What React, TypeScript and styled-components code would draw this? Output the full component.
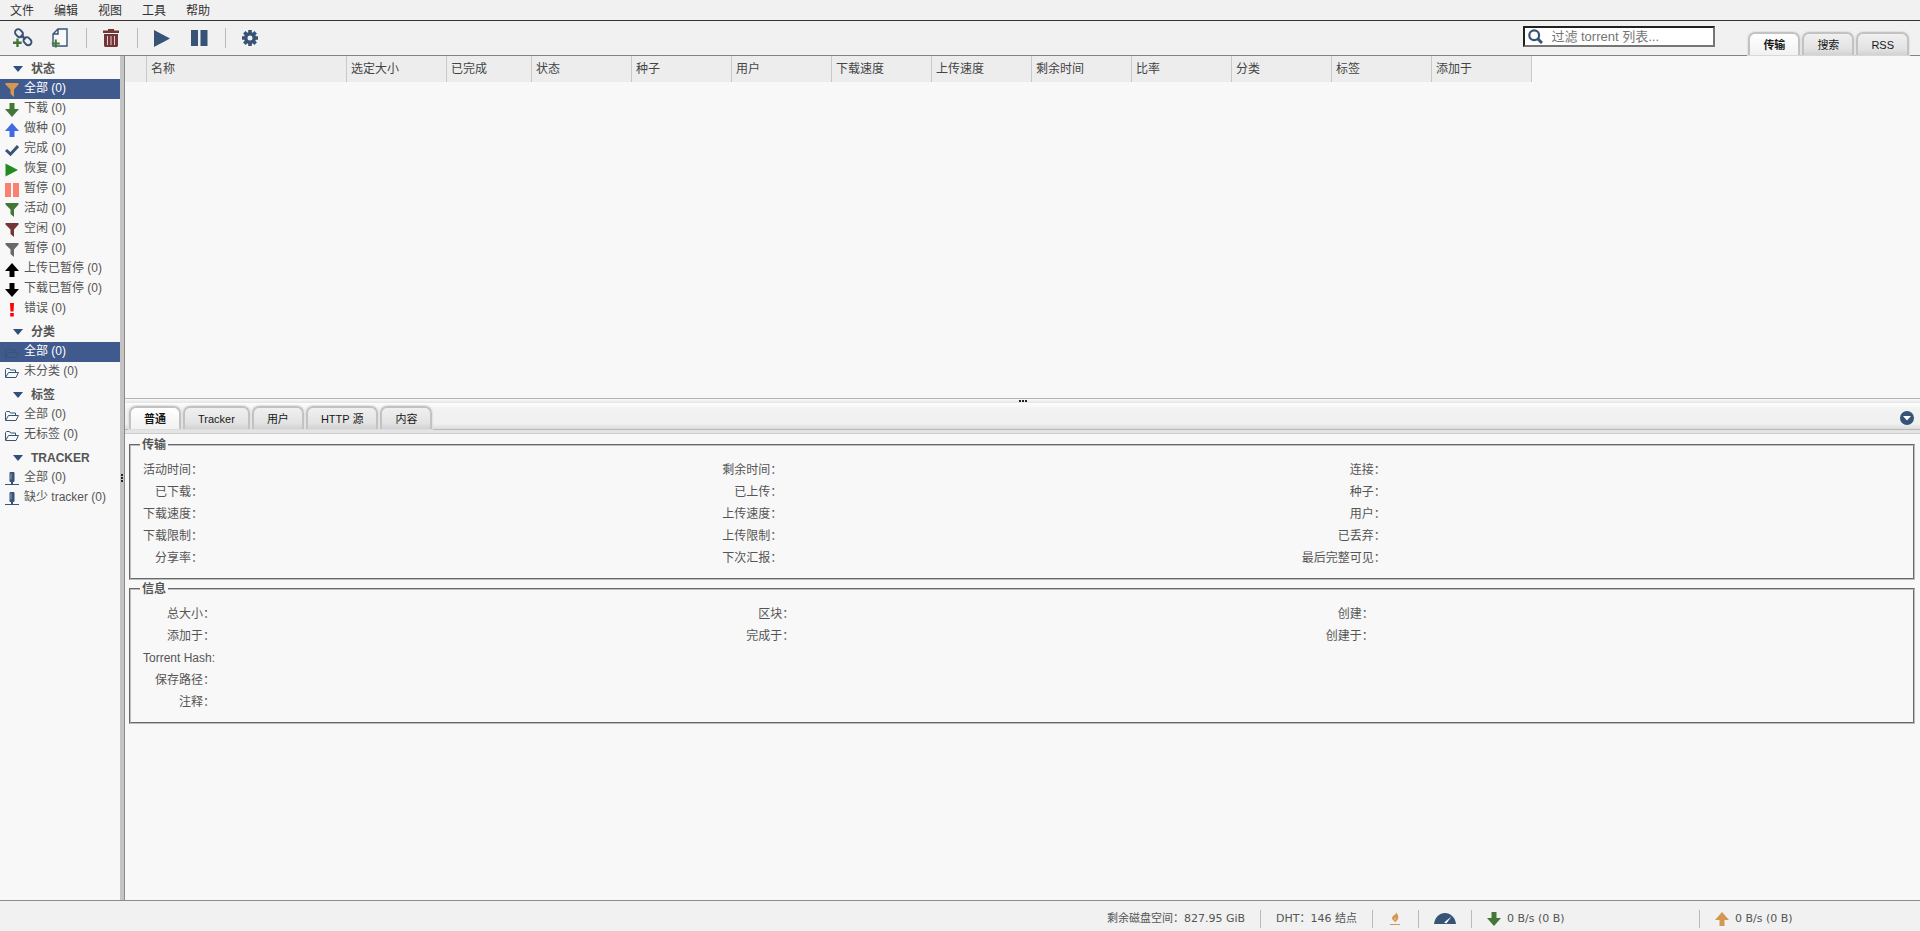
import React from 'react';
import styled, { createGlobalStyle, css } from 'styled-components';

const navy = '#375376';
const green = '#437737';
const maroon = '#733535';
const orange = '#d39752';

const Global = createGlobalStyle`
  * { box-sizing: border-box; }
  body {
    margin: 0;
    background: #f1f1f1;
    color: #555;
    font: 12px/16px "Liberation Sans", Arial, "Noto Sans CJK SC", sans-serif;
  }
  button, input { font: inherit; }
  ul, dl, dd { margin: 0; padding: 0; list-style: none; }
`;

const PlainButton = styled.button`
  margin: 0;
  padding: 0;
  border: 0;
  background: none;
  color: inherit;
  text-align: left;
  white-space: nowrap;
`;

const Page = styled.div`
  display: flex;
  flex-direction: column;
  height: 100vh;
  min-height: 600px;
`;

const MenuBar = styled.nav`
  display: flex;
  height: 21px;
  border-bottom: 1px solid #333;
`;

const MenuButton = styled(PlainButton)`
  padding: 2px 10px 0;
  color: #333;
`;

const Toolbar = styled.header`
  display: flex;
  align-items: stretch;
  justify-content: space-between;
  height: 35px;
  border-bottom: 1px solid #838383;
`;

const ToolGroup = styled.div`
  display: flex;
  align-items: center;
  padding: 0 9px;
`;

const ToolButton = styled(PlainButton)`
  display: flex;
  align-items: center;
  justify-content: center;
  width: 28px;
  height: 28px;
  margin-right: 9px;
`;

const ToolDivider = styled.span`
  width: 1px;
  height: 20px;
  margin-right: 10px;
  margin-left: 3px;
  background: #bbb;
`;

const ToolbarEnd = styled.div`
  display: flex;
  padding-right: 5px;
`;

const SearchBox = styled.label`
  display: flex;
  align-items: center;
  width: 192px;
  height: 21px;
  margin: 5px 30px 0 0;
  padding-left: 3px;
  border: 2px inset #767676;
  background: #fff;
`;

const SearchInput = styled.input`
  width: 100%;
  min-width: 0;
  padding: 0 0 0 8px;
  border: 0;
  outline: 0;
  background: transparent;
  font-size: 13px;
  line-height: 16px;
  color: #333;
  &::placeholder { color: #757575; }
`;

const TabList = styled.div`
  display: flex;
  align-items: flex-end;
  gap: 2px;
`;

const TopTabList = styled(TabList)`
  padding: 0 6px 0 3px;
`;

const Tab = styled.button<{ $active?: boolean }>`
  height: 23px;
  padding: 0 13px;
  border: 2px solid #c2c2c2;
  border-bottom: 0;
  border-radius: 7px 7px 0 0;
  box-shadow: 0 0 1px 1px #e2e2e2;
  background: ${p => (p.$active ? 'linear-gradient(#fff, #f1f1f1)' : 'linear-gradient(#f0f0f0, #e3e3e3 70%, #d2d2d2)')};
  color: #181818;
  font-size: 11px;
  line-height: 16px;
  font-weight: ${p => (p.$active ? 700 : 400)};
  white-space: nowrap;
`;

const Desktop = styled.div`
  display: flex;
  flex: 1;
  min-height: 0;
  background: #f8f8f8;
`;

const Sidebar = styled.aside`
  flex: 0 0 120px;
  overflow: hidden;
`;

const SectionButton = styled(PlainButton)`
  display: flex;
  align-items: center;
  gap: 8px;
  width: 100%;
  height: 23px;
  padding: 3px 0 0 13px;
  font-weight: 700;
  text-transform: uppercase;
`;

const FilterButton = styled(PlainButton)<{ $selected?: boolean }>`
  display: flex;
  align-items: center;
  gap: 5px;
  width: 100%;
  height: 20px;
  padding-left: 5px;
  ${p => p.$selected && css`
    background: #415a8d;
    color: #fff;
  `}
  svg { margin-top: 1px; }
`;

const FilterLabel = styled.span`
  margin-bottom: 2px;
`;

const VerticalHandle = styled.div`
  display: flex;
  align-items: center;
  justify-content: center;
  flex: 0 0 5px;
  border-right: 1px solid #8a8a8a;
  background: #c4c4c4;
`;

const Main = styled.main`
  display: flex;
  flex: 1;
  flex-direction: column;
  min-width: 0;
`;

const Transfers = styled.section`
  flex: 0 0 343px;
  overflow: hidden;
  border-bottom: 1px solid #b4b4b4;
`;

const TransferTable = styled.table`
  table-layout: fixed;
  width: 1407px;
  border-collapse: separate;
  border-spacing: 0;
`;

const ColumnHead = styled.th<{ $width: number }>`
  width: ${p => p.$width}px;
  height: 26px;
  padding: 0 4px;
  border-right: 1px solid #c9c9c9;
  background: #ededed;
  color: #444;
  font-weight: 400;
  text-align: left;
  white-space: nowrap;
`;

const HorizontalHandle = styled.div`
  display: flex;
  align-items: center;
  justify-content: center;
  flex: 0 0 4px;
  background: linear-gradient(#fafafa, #e4e4e4);
`;

const PropertyBar = styled.div`
  display: flex;
  align-items: flex-end;
  justify-content: space-between;
  flex: none;
  height: 27px;
  padding: 0 6px 0 4px;
  border-bottom: 1px solid #b8b8b8;
  background: linear-gradient(#fdfdfd, #f2f2f2 25%, #f0f0f0 80%, #dcdcdc);
`;

const CollapseButton = styled(PlainButton)`
  display: flex;
  margin-bottom: 4px;
`;

const BarShade = styled.div`
  flex: 0 0 4px;
  border-bottom: 1px solid #cdcdcd;
  background: #e4e4e4;
`;

const Properties = styled.section`
  display: flex;
  flex: 1;
  flex-direction: column;
  gap: 1px;
  min-height: 0;
  overflow: hidden;
  padding: 3px 5px 0 4px;
`;

const Group = styled.fieldset`
  min-width: 0;
  margin: 0;
  padding: 6px 8px 9px 12px;
  border: 2px groove #bdbdbd;
`;

const GroupTitle = styled.legend`
  margin-left: -3px;
  padding: 0 2px;
  font-weight: 700;
`;

const Facts = styled.dl`
  display: grid;
  grid-template-columns: repeat(3, auto 1fr);
  line-height: 22px;
`;

const FactName = styled.dt`
  text-align: right;
  white-space: nowrap;
`;

const FactValue = styled.dd<{ $wide?: boolean }>`
  ${p => p.$wide && 'grid-column: 2 / -1;'}
`;

const StatusBar = styled.footer`
  display: flex;
  align-items: center;
  justify-content: flex-end;
  flex: none;
  height: 31px;
  padding-top: 6px;
  border-top: 1px solid #8c8c8c;
  background: #f1f1f1;
  font-family: "DejaVu Sans", Verdana, "Noto Sans CJK SC", sans-serif;
  font-size: 11px;
`;

const StatusItem = styled.div<{ $width?: number }>`
  display: flex;
  align-items: center;
  height: 18px;
  width: ${p => (p.$width ? `${p.$width}px` : 'auto')};
  padding: 0 15px;
  border-left: 1px solid #bbb;
  white-space: nowrap;
  &:first-child { border-left: 0; }
`;

const StatusButton = styled(PlainButton)`
  display: flex;
  align-items: center;
  gap: 6px;
`;

type IconName =
  | 'funnel' | 'down' | 'up' | 'check' | 'play' | 'pause' | 'error' | 'folder' | 'server';

const shapes: Record<IconName, (c: string) => React.ReactNode> = {
  funnel: c => <path fill={c} d="M.5 0h13v1.500L9 6.500V14L5.500 11V6.500L.5 1.500z" />,
  down: c => <path fill={c} d="M4.500 0h5v6H14L7 14 0 6h4.500z" />,
  up: c => <path fill={c} d="M4.500 14h5V8H14L7 0 0 8h4.500z" />,
  check: c => <path fill="none" stroke={c} strokeWidth="3" d="M1 7l4.500 4.200L13 3" />,
  play: c => <path fill={c} d="M.5 .5L13 7 .5 13.500z" />,
  pause: c => <path fill={c} d="M0 0h6v14H0zM8 0h6v14H8z" />,
  error: c => <path fill={c} d="M5 0h4L8.500 8.500h-3zM5.200 10h3.600v3.500H5.200z" />,
  folder: c => (
    <path
      fill="none"
      stroke={c}
      strokeWidth="1"
      strokeLinejoin="round"
      d="M.5 11V3.500L1.500 2.500h3l1 1.500h5v2.500M.5 11.500L3.500 6.500h10l-2.500 5z"
    />
  ),
  server: c => (
    <>
      <rect x="4.500" y="0" width="5" height="10" rx="1" fill={c} />
      <path stroke="#8fa5bd" d="M6 1.500v6" />
      <path fill={c} d="M6 10h2v2h6v1H0v-1h6z" />
    </>
  ),
};

const Icon = ({ name, color }: { name: IconName; color: string }) => (
  <svg width="14" height="14" viewBox="0 0 14 14" aria-hidden="true">
    {shapes[name](color)}
  </svg>
);

const LinkIcon = () => (
  <svg width="20" height="20" viewBox="0 0 20 20" aria-hidden="true">
    <g fill="none" stroke={navy} strokeWidth="1.900">
      <rect x="1.700" y="2" width="8.600" height="6.400" rx="3.200" transform="rotate(45 6 5.200)" />
      <rect x="10.200" y="10" width="8.600" height="6.400" rx="3.200" transform="rotate(45 14.500 13.200)" />
      <path strokeWidth="2.400" d="M8 6.800l4.500 4.500" />
    </g>
    <path fill={green} d="M3.300 10.500h2.400v3h3v2.400h-3V19H3.300v-3.100H0v-2.400h3.300z" />
  </svg>
);

const FileIcon = () => (
  <svg width="18" height="20" viewBox="0 0 18 20" aria-hidden="true">
    <path fill="#f8f8f8" stroke={navy} strokeWidth="1.400" d="M2 18V6l5-5h9v17zM2 6h5V1" />
    <path fill={green} d="M3.800 11.500h2v3h3v2h-3v3h-2v-3H.8v-2h3z" />
  </svg>
);

const TrashIcon = () => (
  <svg width="16" height="18" viewBox="0 0 16 18" aria-hidden="true">
    <path fill={maroon} d="M5 0h6v1.500h5V4H0V1.500h5zM1 5h14v12l-1 1H2l-1-1z" />
    <path stroke="#e0cfcf" strokeWidth="1" d="M4.500 7v9M8 7v9M11.500 7v9" />
  </svg>
);

const PlayIcon = () => (
  <svg width="16" height="17" viewBox="0 0 16 17" aria-hidden="true">
    <path fill={navy} d="M0 0l16 8.500L0 17z" />
  </svg>
);

const PauseIcon = () => (
  <svg width="17" height="16" viewBox="0 0 17 16" aria-hidden="true">
    <path fill={navy} d="M0 0h7v16H0zM9.500 0h7v16h-7z" />
  </svg>
);

const GearIcon = () => (
  <svg width="16" height="16" viewBox="0 0 16 16" aria-hidden="true">
    <circle cx="8" cy="8" r="4.300" fill="none" stroke={navy} strokeWidth="3.600" />
    {[0, 45, 90, 135].map(a => (
      <path key={a} fill={navy} transform={`rotate(${a} 8 8)`} d="M6.200 0h3.600v4H6.200zM6.200 12h3.600v4H6.200z" />
    ))}
  </svg>
);

const SearchGlyph = styled.svg`
  flex: none;
`;

const SearchIcon = () => (
  <SearchGlyph width="15" height="15" viewBox="0 0 15 15" aria-hidden="true">
    <circle cx="6.200" cy="6.200" r="4.900" fill="none" stroke={navy} strokeWidth="2.200" />
    <path stroke={navy} strokeWidth="3" d="M9.800 9.800L14 14" />
  </SearchGlyph>
);

const ChevronIcon = () => (
  <svg width="10" height="6" viewBox="0 0 10 6" aria-hidden="true">
    <path fill="#2f507c" d="M0 0h10L5 6z" />
  </svg>
);

const CollapseIcon = () => (
  <svg width="14" height="14" viewBox="0 0 14 14" aria-hidden="true">
    <circle cx="7" cy="7" r="7" fill={navy} />
    <path fill="#fff" d="M3 5h8L7 9.500z" />
  </svg>
);

const Dots = ({ vertical }: { vertical?: boolean }) => (
  <svg width={vertical ? 2 : 8} height={vertical ? 8 : 2} aria-hidden="true">
    {[0, 3, 6].map(n => (
      <rect key={n} x={vertical ? 0 : n} y={vertical ? n : 0} width="2" height="2" fill="#222" />
    ))}
  </svg>
);

const FlameIcon = () => (
  <svg width="15" height="14" viewBox="0 0 15 14" aria-hidden="true">
    <path fill={orange} d="M8.500 0c0 1.800 2.300 3 1.700 6-.4 2.200-2 3-3.200 4.500C7 9 5.800 9.200 4.500 7.500 3.300 5.500 5 3.800 6.500 3 7.600 2.200 8.300 1.200 8.500 0z" />
    <path fill="#f1f1f1" d="M7.600 5.500c.4 1.200-.8 1.800-.6 3-.9-.9-.5-2 .6-3z" />
    <path fill={orange} d="M2 12h10v1H2z" />
  </svg>
);

const GaugeIcon = () => (
  <svg width="22" height="12" viewBox="0 0 24 12" preserveAspectRatio="none" aria-hidden="true">
    <path fill={navy} d="M0 11C1 4 6 0 12 0c6 0 11 4 12 11z" />
    <path fill="#fff" d="M19 3.500L13.500 10.500l-2.500-1z" />
  </svg>
);

interface Filter {
  label: string;
  icon: IconName;
  color: string;
  selected?: boolean;
}

const filterSections: { title: string; filters: Filter[] }[] = [
  {
    title: '状态',
    filters: [
      { label: '全部 (0)', icon: 'funnel', color: orange, selected: true },
      { label: '下载 (0)', icon: 'down', color: green },
      { label: '做种 (0)', icon: 'up', color: '#4169e1' },
      { label: '完成 (0)', icon: 'check', color: navy },
      { label: '恢复 (0)', icon: 'play', color: '#228b22' },
      { label: '暂停 (0)', icon: 'pause', color: '#fa8072' },
      { label: '活动 (0)', icon: 'funnel', color: green },
      { label: '空闲 (0)', icon: 'funnel', color: maroon },
      { label: '暂停 (0)', icon: 'funnel', color: '#696969' },
      { label: '上传已暂停 (0)', icon: 'up', color: '#000' },
      { label: '下载已暂停 (0)', icon: 'down', color: '#000' },
      { label: '错误 (0)', icon: 'error', color: '#f00' },
    ],
  },
  {
    title: '分类',
    filters: [
      { label: '全部 (0)', icon: 'folder', color: navy, selected: true },
      { label: '未分类 (0)', icon: 'folder', color: navy },
    ],
  },
  {
    title: '标签',
    filters: [
      { label: '全部 (0)', icon: 'folder', color: navy },
      { label: '无标签 (0)', icon: 'folder', color: navy },
    ],
  },
  {
    title: 'Tracker',
    filters: [
      { label: '全部 (0)', icon: 'server', color: navy },
      { label: '缺少 tracker (0)', icon: 'server', color: navy },
    ],
  },
];

const columns: [string, number][] = [
  ['', 22], ['名称', 200], ['选定大小', 100], ['已完成', 85], ['状态', 100], ['种子', 100],
  ['用户', 100], ['下载速度', 100], ['上传速度', 100], ['剩余时间', 100], ['比率', 100],
  ['分类', 100], ['标签', 100], ['添加于', 100],
];

const transferFacts = [
  ['活动时间：', '剩余时间：', '连接：'],
  ['已下载：', '已上传：', '种子：'],
  ['下载速度：', '上传速度：', '用户：'],
  ['下载限制：', '上传限制：', '已丢弃：'],
  ['分享率：', '下次汇报：', '最后完整可见：'],
];

const infoFacts = [
  ['总大小：', '区块：', '创建：'],
  ['添加于：', '完成于：', '创建于：'],
  ['Torrent Hash:'],
  ['保存路径：'],
  ['注释：'],
];

const FactGroup = ({ title, rows }: { title: string; rows: string[][] }) => (
  <Group>
    <GroupTitle>{title}</GroupTitle>
    <Facts>
      {rows.map(row =>
        row.map(name => (
          <React.Fragment key={name}>
            <FactName>{name}</FactName>
            <FactValue $wide={row.length === 1} />
          </React.Fragment>
        )),
      )}
    </Facts>
  </Group>
);

export default function App() {
  return (
    <Page>
      <Global />
      <MenuBar>
        {['文件', '编辑', '视图', '工具', '帮助'].map(m => <MenuButton key={m}>{m}</MenuButton>)}
      </MenuBar>

      <Toolbar>
        <ToolGroup>
          <ToolButton aria-label="添加链接"><LinkIcon /></ToolButton>
          <ToolButton aria-label="添加文件"><FileIcon /></ToolButton>
          <ToolDivider />
          <ToolButton aria-label="删除"><TrashIcon /></ToolButton>
          <ToolDivider />
          <ToolButton aria-label="恢复"><PlayIcon /></ToolButton>
          <ToolButton aria-label="暂停"><PauseIcon /></ToolButton>
          <ToolDivider />
          <ToolButton aria-label="选项"><GearIcon /></ToolButton>
        </ToolGroup>
        <ToolbarEnd>
          <SearchBox>
            <SearchIcon />
            <SearchInput type="text" aria-label="过滤" placeholder="过滤 torrent 列表..." />
          </SearchBox>
          <TopTabList role="tablist">
            <Tab role="tab" aria-selected="true" $active>传输</Tab>
            <Tab role="tab">搜索</Tab>
            <Tab role="tab">RSS</Tab>
          </TopTabList>
        </ToolbarEnd>
      </Toolbar>

      <Desktop>
        <Sidebar>
          {filterSections.map(section => (
            <section key={section.title}>
              <SectionButton><ChevronIcon />{section.title}</SectionButton>
              <ul>
                {section.filters.map((f, i) => (
                  <li key={i}>
                    <FilterButton $selected={f.selected}>
                      <Icon name={f.icon} color={f.color} />
                      <FilterLabel>{f.label}</FilterLabel>
                    </FilterButton>
                  </li>
                ))}
              </ul>
            </section>
          ))}
        </Sidebar>
        <VerticalHandle role="separator"><Dots vertical /></VerticalHandle>

        <Main>
          <Transfers>
            <TransferTable>
              <thead>
                <tr>
                  {columns.map(([name, width]) => (
                    <ColumnHead key={name} $width={width} scope="col">{name}</ColumnHead>
                  ))}
                </tr>
              </thead>
            </TransferTable>
          </Transfers>
          <HorizontalHandle role="separator"><Dots /></HorizontalHandle>
          <PropertyBar>
            <TabList role="tablist">
              <Tab role="tab" aria-selected="true" $active>普通</Tab>
              <Tab role="tab">Tracker</Tab>
              <Tab role="tab">用户</Tab>
              <Tab role="tab">HTTP 源</Tab>
              <Tab role="tab">内容</Tab>
            </TabList>
            <CollapseButton aria-label="折叠"><CollapseIcon /></CollapseButton>
          </PropertyBar>
          <BarShade />
          <Properties>
            <FactGroup title="传输" rows={transferFacts} />
            <FactGroup title="信息" rows={infoFacts} />
          </Properties>
        </Main>
      </Desktop>

      <StatusBar>
        <StatusItem>剩余磁盘空间：827.95 GiB</StatusItem>
        <StatusItem>DHT：146 结点</StatusItem>
        <StatusItem><FlameIcon /></StatusItem>
        <StatusItem><StatusButton aria-label="备用速度限制"><GaugeIcon /></StatusButton></StatusItem>
        <StatusItem $width={228}>
          <StatusButton><Icon name="down" color={green} />0 B/s (0 B)</StatusButton>
        </StatusItem>
        <StatusItem $width={221}>
          <StatusButton><Icon name="up" color={orange} />0 B/s (0 B)</StatusButton>
        </StatusItem>
      </StatusBar>
    </Page>
  );
}
